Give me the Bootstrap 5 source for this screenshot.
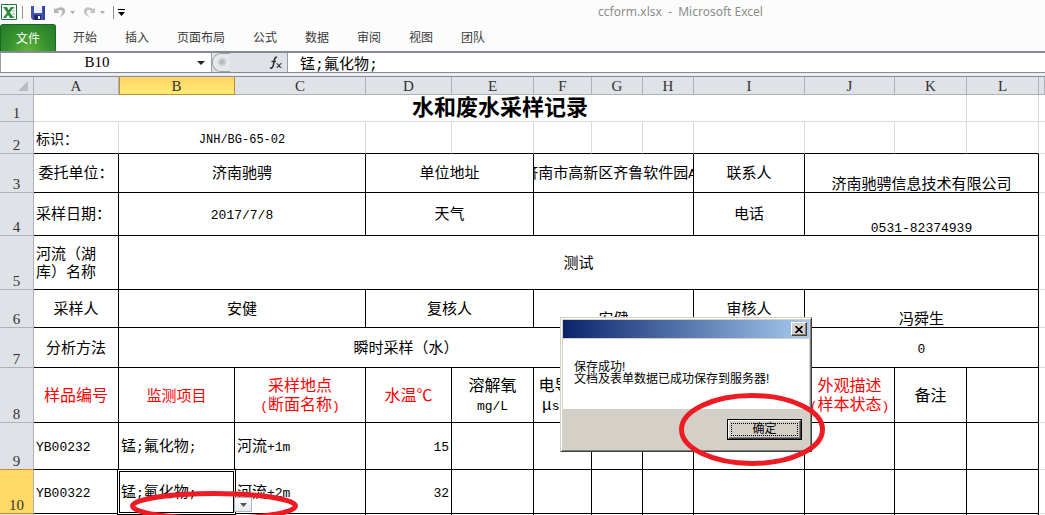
<!DOCTYPE html>
<html lang="zh-CN">
<head>
<meta charset="utf-8">
<meta name="viewport" content="width=device-width, initial-scale=1">
<title>ccform.xlsx - Microsoft Excel</title>
<link href="https://cdn.jsdelivr.net/npm/bootstrap@5.3.0/dist/css/bootstrap.min.css" rel="stylesheet">
<style>
  :root { --chrome: #dfe2e7; --rule: #adb2b8; --dark-rule: #868a91; --gridline: #d8dadc; --mark: #ed1c24; }
  body { background: #fff; color: #000; font-family: "Liberation Mono", "Noto Sans CJK SC", sans-serif; font-size: 15px; line-height: 18px; }
  button { border: 0; padding: 0; background: none; color: inherit; line-height: 1; }
  svg { display: block; }

  /* Window title and quick access */
  .titlebar { height: 24px; background: #fcfcfc; }
  .title-text { font: 12px/24px "Noto Sans", "Noto Sans CJK SC", sans-serif; color: #8c8c8c; white-space: pre; left: 598px; top: 0; }
  .sep { width: 1px; height: 13px; background: #8e8e8e; }

  /* Ribbon tabs */
  .ribbon { background: #fcfcfc; border-bottom: 2px solid var(--dark-rule); height: 29px; font: 12px/26px "Noto Sans CJK SC", sans-serif; }
  .ribbon a { color: #3b3b3b; text-decoration: none; padding: 0 14px; white-space: nowrap; }
  .ribbon .file-tab { width: 56px; margin-right: 3px; padding: 0; text-align: center; color: #fff; border: 1px solid #186a22; border-bottom: 0; border-radius: 3px 3px 0 0; background: radial-gradient(ellipse at 50% 100%, #62b53c 0, #38932f 50%, #237a29 100%); line-height: 25px; }

  /* Formula bar */
  .formula-bar { height: 20px; border-bottom: 1px solid var(--dark-rule); background: var(--chrome); }
  .formula-bar input { border: 0; outline: 0; padding: 0; height: 19px; color: #000; background: #fff; min-width: 0; }
  .name-box { width: 212px; background: #fff; border-left: 1px solid #9a9ea4; border-right: 1px solid #9a9ea4; }
  .name-box input { font: 15px/19px "Liberation Serif", serif; text-align: center; width: 192px; }
  .fx-area { width: 75px; }
  .knob { width: 18px; height: 19px; border: 1px solid #9da2a8; border-right: 0; border-radius: 9px 0 0 9px; background: radial-gradient(circle at 9px 8px, #a9adb2 0, #d5d8dc 4px, #e6e8eb 5px); }
  .formula-bar .formula-input { border-left: 1px solid #9a9ea4; padding-left: 12px; }
  .gap-strip { height: 4px; background: #e9eef5; border-bottom: 1px solid #868b90; }

  /* Sheet */
  .sheet { table-layout: fixed; border-collapse: separate; border-spacing: 0; width: 100%; }
  .sheet th, .sheet td { border: 0 solid #000; border-width: 0 1px 1px 0; padding: 4px 2px 0; overflow: hidden; white-space: nowrap; text-align: center; vertical-align: middle; }
  .sheet th { background: var(--chrome); border-color: var(--rule); color: #333; font: 15px/16px "Liberation Serif", serif; padding: 1px 0 0; }
  .sheet tbody th { vertical-align: bottom; }
  .sheet td.faint, .sheet td:last-child { border-color: var(--gridline); }
  .sheet td:last-child { border-right: 0; }
  .sheet .tag td { border-right-color: var(--gridline); font-size: 14px; }
  .sheet td.start { text-align: left; }
  .sheet td.end { text-align: right; }
  .sheet td.low { vertical-align: bottom; line-height: 13px; }
  .sheet td.wraps { white-space: normal; text-align: left; }
  .sheet .heads td { font-size: 16px; line-height: 19px; }
  .sheet .heads td.head-sm { font-size: 15px; }
  .sheet .red-text { color: #f00; }
  .sheet td.sheet-title { font-size: 22px; line-height: 22px; font-weight: 700; }
  .lat { font-size: 13px; }
  .lat-s { font-size: 12px; }
  .sheet th.picked-col { background: linear-gradient(#ffd568, #ffed73); border-color: #c68a33; box-shadow: inset 1px 0 #c68a33; }
  .sheet th.picked-row { background: #ffd966; border-bottom-color: #c68a33; box-shadow: 0 -1px #c68a33; }
  .sheet td.active-cell { overflow: visible; position: relative; }
  .active-cell::after { content: ""; position: absolute; inset: 1px 0 0 0; border: 1px solid #000; box-shadow: 0 0 0 1px #fff, 0 0 0 2px #000; }
  .cell-drop { position: absolute; z-index: 1; left: 100%; bottom: 1px; width: 18px; height: 15px; border: 1px solid #aeb6c2; background: linear-gradient(#fff, #e6e9ee); }
  .spill { display: flex; justify-content: center; margin: 0 -2px; }
  .corner svg { margin: 0 5px 0 auto; }

  /* Message box */
  .msgbox { left: 560px; top: 317px; width: 252px; background: #d4d0c8; border: 1px solid #d4d0c8; border-right-color: #404040; border-bottom-color: #404040; box-shadow: inset 1px 1px #fff, inset -1px -1px #808080; padding: 2px; font: 12px/12px "Liberation Sans", "Noto Sans CJK SC", sans-serif; }
  .msg-title { height: 18px; background: linear-gradient(90deg, #0a246a, #a6caf0); padding: 0 2px; margin-bottom: 1px; }
  .msg-text { background: #fff; height: 70px; padding: 22px 11px 0; }
  .msg-foot { height: 40px; padding-right: 7px; }
  .raised { background: #d4d0c8; border: 1px solid; border-color: #fff #404040 #404040 #fff; box-shadow: inset -1px -1px #808080; }
  .msg-close { width: 16px; height: 14px; }
  .ok-btn { width: 73px; height: 19px; outline: 1px solid #000; padding: 2px; margin-right: 1px; }
  .ok-btn span { display: block; border: 1px dotted #000; line-height: 11px; }
  .ring { pointer-events: none; z-index: 5; }
  .ring ellipse { fill: none; stroke: var(--mark); stroke-width: 5; }
  .ring-ok { left: 678px; top: 392px; }
  .ring-cell { left: 129px; top: 489px; }
</style>
</head>
<body>
<div class="vh-100 d-flex flex-column overflow-hidden position-relative">
  <header class="titlebar d-flex align-items-center flex-shrink-0">
    <svg width="18" height="18" viewBox="0 0 18 18"><path d="M1.500 1.500h15v15h-15z" fill="#fff" stroke="#1d7436"/><path d="M12 5h3M12 8h3M12 11h3M12 14h3" stroke="#7eb98c"/><path d="M3 4h4l1.500 3L11 4h3l-4 5.500 4 5.500h-4l-2-3-2 3H3l4-5.500z" fill="#2c8b3d"/></svg>
    <span class="sep ms-1 me-2"></span>
    <button aria-label="保存"><svg width="14" height="15" viewBox="0 0 14 15"><path d="M0 1h14v14H2l-2-2z" fill="#4355b8"/><path d="M3 1h8v7H3z" fill="#eef2fb"/><path d="M3 10h7v5H3z" fill="#252b60"/><path d="M7 11h2v3H7z" fill="#eee"/><path d="M13 1v14" stroke="#27348b"/></svg></button>
    <button aria-label="撤消" class="ms-2"><svg width="13" height="15" viewBox="0 0 14 15"><path d="M1 2v6h6L5 6c3-2 5-1 5 1 0 3-2 4-3 6 4-2 6-4 6-7 0-5-6-5-10-2z" fill="#b3b5b9"/></svg></button>
    <button aria-label="撤消选项" class="ms-1"><svg width="5" height="3"><path d="M0 0h5L2.500 3z" fill="#aaa"/></svg></button>
    <button aria-label="恢复" class="ms-2"><svg width="13" height="15" viewBox="0 0 14 15"><path d="M13 2v6H7l2-2C6 4 4 5 4 7c0 3 2 4 3 6-4-2-6-4-6-7 0-5 6-5 10-2z" fill="#c0c2c5"/></svg></button>
    <button aria-label="恢复选项" class="ms-1"><svg width="5" height="3"><path d="M0 0h5L2.500 3z" fill="#aaa"/></svg></button>
    <span class="sep ms-2 me-1"></span>
    <button aria-label="自定义快速访问工具栏"><svg width="7" height="7"><path d="M0 .5h7" stroke="#000"/><path d="M0 3h7L3.500 7z"/></svg></button>
    <span class="title-text position-absolute">ccform.xlsx  -  Microsoft Excel</span>
  </header>

  <nav class="ribbon d-flex flex-shrink-0">
    <a href="#" class="file-tab">文件</a>
    <a href="#">开始</a><a href="#">插入</a><a href="#">页面布局</a><a href="#">公式</a><a href="#">数据</a><a href="#">审阅</a><a href="#">视图</a><a href="#">团队</a>
  </nav>

  <div class="formula-bar d-flex flex-shrink-0">
    <div class="name-box d-flex align-items-center">
      <input type="text" value="B10" aria-label="名称框">
      <button class="ms-1" aria-label="名称列表"><svg width="8" height="4"><path d="M0 0h8L4 4z" fill="#222"/></svg></button>
    </div>
    <div class="fx-area d-flex align-items-center justify-content-between">
      <span class="knob"></span>
      <button class="me-1" aria-label="插入函数"><svg width="14" height="14" viewBox="0 0 14 14" fill="none" stroke="#333"><path d="M8 1.500C6 .5 5.500 3 5 6s-1 7-4 6M2.500 5.500H7" stroke-width="1.600"/><path d="M7.500 7.500c2 0 2 4 5 4M12.500 7.500c-2 0-3 4-5 4" stroke-width="1.200"/></svg></button>
    </div>
    <input type="text" class="formula-input flex-fill" value="锰;氟化物;" aria-label="编辑栏">
  </div>
  <div class="gap-strip flex-shrink-0"></div>

  <main class="flex-fill overflow-hidden">
    <table class="sheet">
      <colgroup>
        <col style="width:34px"><col style="width:85px"><col style="width:116px"><col style="width:131px"><col style="width:86px"><col style="width:82px"><col style="width:58px"><col style="width:51px"><col style="width:51px"><col style="width:111px"><col style="width:90px"><col style="width:72px"><col style="width:72px"><col>
      </colgroup>
      <thead>
        <tr style="height:18px"><th class="corner"><svg width="10" height="10"><path d="M10 0v10H0z" fill="#b9bdc2"/></svg></th><th>A</th><th class="picked-col">B</th><th>C</th><th>D</th><th>E</th><th>F</th><th>G</th><th>H</th><th>I</th><th>J</th><th>K</th><th>L</th><th></th></tr>
      </thead>
      <tbody>
        <tr style="height:27px"><th>1</th><td colspan="11" class="sheet-title faint">水和废水采样记录</td><td class="faint"></td><td></td></tr>
        <tr style="height:32px" class="tag"><th>2</th><td class="start">标识：</td><td colspan="2"><span class="lat-s">JNH/BG-65-02</span></td><td></td><td></td><td></td><td></td><td></td><td></td><td></td><td></td><td></td><td></td></tr>
        <tr style="height:39px"><th>3</th><td>委托单位：</td><td colspan="2">济南驰骋</td><td colspan="2">单位地址</td><td colspan="3"><span class="spill">济南市高新区齐鲁软件园<span class="lat">A&nbsp;</span></span></td><td>联系人</td><td colspan="3" class="low">济南驰骋信息技术有限公司</td><td></td></tr>
        <tr style="height:43px"><th>4</th><td class="start">采样日期：</td><td colspan="2"><span class="lat">2017/7/8</span></td><td colspan="2">天气</td><td colspan="3"></td><td>电话</td><td colspan="3" class="low"><span class="lat">0531-82374939</span></td><td></td></tr>
        <tr style="height:54px"><th>5</th><td class="wraps">河流（湖<br>库）名称</td><td colspan="11">测试</td><td></td></tr>
        <tr style="height:38px"><th>6</th><td>采样人</td><td colspan="2">安健</td><td colspan="2">复核人</td><td colspan="3" class="low">安健</td><td>审核人</td><td colspan="3" class="low">冯舜生</td><td></td></tr>
        <tr style="height:40px"><th>7</th><td>分析方法</td><td colspan="7">瞬时采样（水）</td><td></td><td colspan="3"><span class="lat">0</span></td><td></td></tr>
        <tr style="height:55px" class="heads"><th>8</th><td class="red-text">样品编号</td><td class="red-text head-sm">监测项目</td><td class="red-text">采样地点<br><span class="lat">(</span>断面名称<span class="lat">)</span></td><td class="red-text">水温℃</td><td>溶解氧<br><span class="lat">mg/L</span></td><td>电导率<br>μ<span class="lat">s/cm</span></td><td></td><td></td><td></td><td class="red-text">外观描述<br><span class="lat">(</span>样本状态<span class="lat">)</span></td><td>备注</td><td></td><td></td></tr>
        <tr style="height:47px"><th>9</th><td class="start"><span class="lat">YB00232</span></td><td class="start">锰<span class="lat">;</span>氟化物<span class="lat">;</span></td><td class="start">河流<span class="lat">+1m</span></td><td class="end"><span class="lat">15</span></td><td></td><td></td><td></td><td></td><td></td><td></td><td></td><td></td><td></td></tr>
        <tr style="height:44px"><th class="picked-row">10</th><td class="start"><span class="lat">YB00322</span></td><td class="start active-cell">锰<span class="lat">;</span>氟化物<span class="lat">;</span><button class="cell-drop d-flex align-items-center justify-content-center" aria-label="选择监测项目"><svg width="7" height="4"><path d="M0 0h7L3.500 4z" fill="#555"/></svg></button></td><td class="start">河流<span class="lat">+2m</span></td><td class="end"><span class="lat">32</span></td><td></td><td></td><td></td><td></td><td></td><td></td><td></td><td></td><td></td></tr>
        <tr style="height:44px"><th>11</th><td></td><td></td><td></td><td></td><td></td><td></td><td></td><td></td><td></td><td></td><td></td><td></td><td></td></tr>
      </tbody>
    </table>
  </main>

  <section class="msgbox position-absolute" role="dialog" aria-label="提示">
    <div class="msg-title d-flex align-items-center justify-content-end"><button class="raised msg-close d-flex align-items-center justify-content-center" aria-label="关闭"><svg width="8" height="7"><path d="M.5 0l7 7M7.500 0l-7 7" stroke="#000" stroke-width="1.600"/></svg></button></div>
    <div class="msg-text">保存成功!<br>文档及表单数据已成功保存到服务器!</div>
    <div class="msg-foot d-flex align-items-center justify-content-end"><button class="raised ok-btn"><span>确定</span></button></div>
  </section>

  <svg class="ring ring-ok position-absolute" width="148" height="75"><ellipse cx="74" cy="37.500" rx="70.500" ry="34"/></svg>
  <svg class="ring ring-cell position-absolute" width="170" height="34"><ellipse cx="85" cy="17" rx="81.500" ry="12.500"/></svg>
</div>
<script src="https://cdn.jsdelivr.net/npm/bootstrap@5.3.0/dist/js/bootstrap.bundle.min.js"></script>
</body>
</html>
